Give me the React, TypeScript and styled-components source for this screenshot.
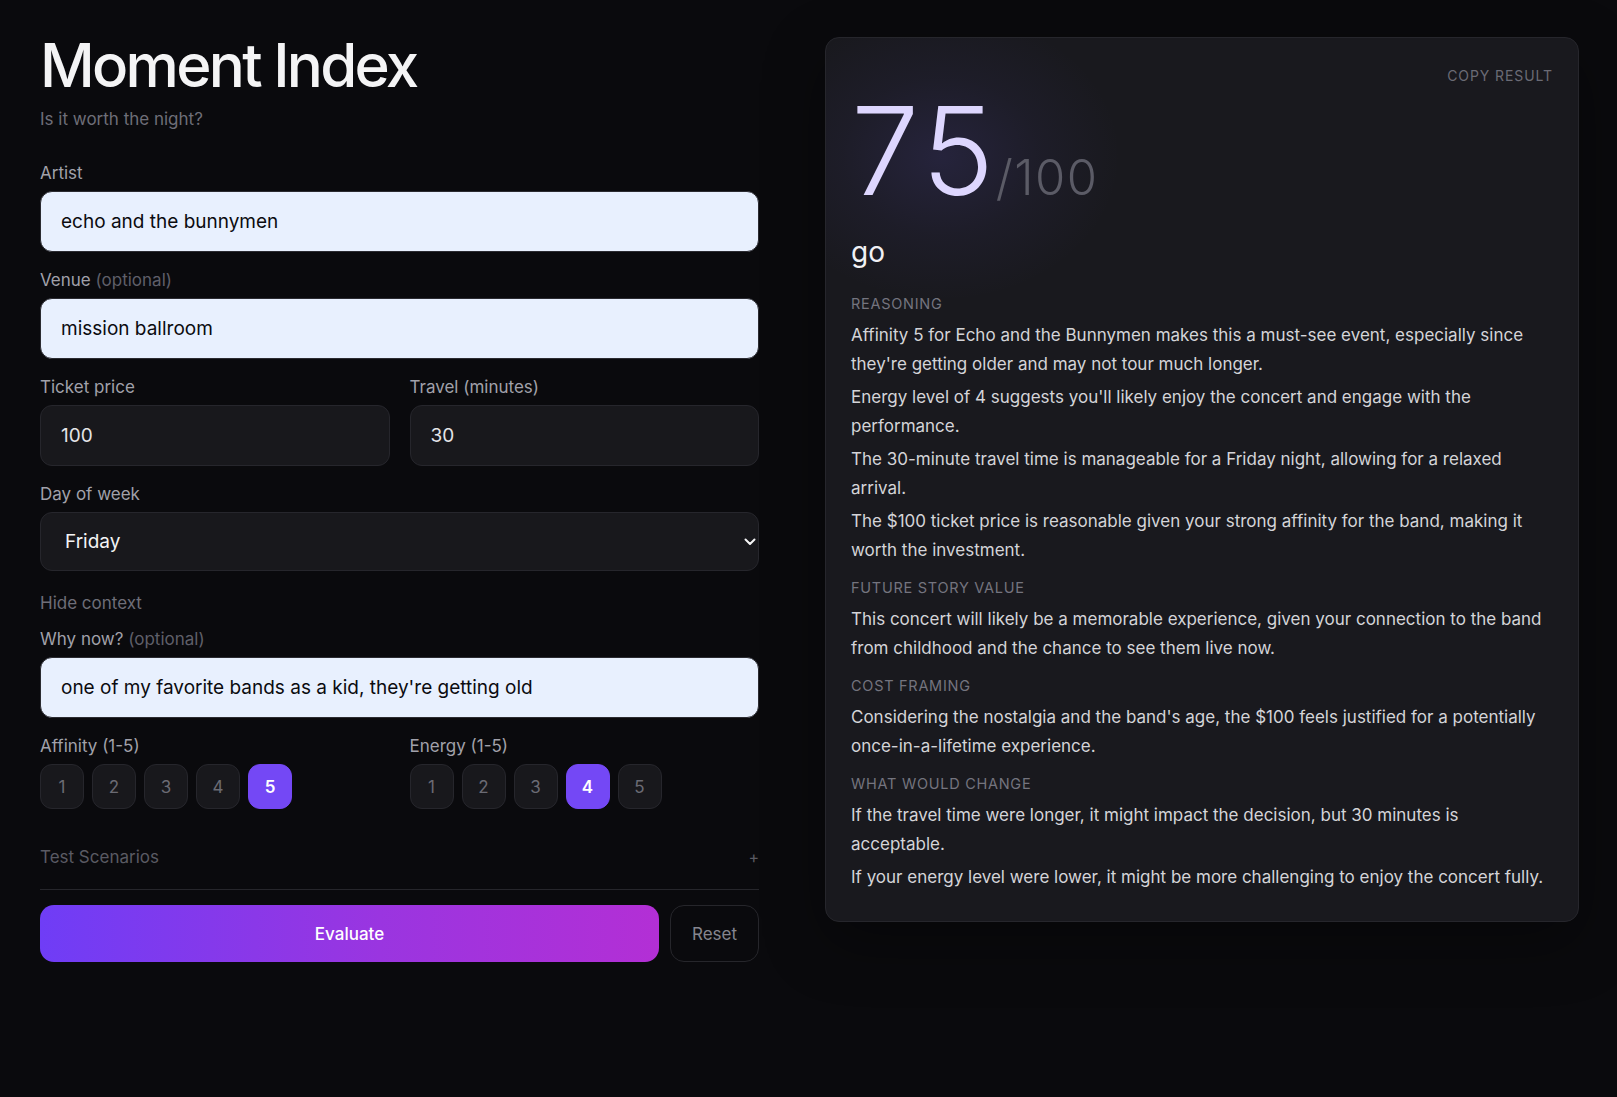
import React from "react";
import styled, { createGlobalStyle } from "styled-components";

const GlobalStyle = createGlobalStyle`
  html, body {
    margin: 0;
    padding: 0;
    background: #0a0a0d;
  }
  body {
    font-family: Inter, "Noto Sans", sans-serif;
    color: #e4e4e7;
    -webkit-font-smoothing: antialiased;
  }
  * { box-sizing: border-box; }
`;

const Page = styled.div`
  min-height: 1097px;
  padding: 36px 38px 40px 40px;
  display: grid;
  grid-template-columns: 719px 1fr;
  column-gap: 66px;
  align-items: start;
`;

const Left = styled.div`
  display: flex;
  flex-direction: column;
`;

const Title = styled.h1`
  margin: 0;
  font-size: 60px;
  line-height: 58px;
  font-weight: 500;
  letter-spacing: -0.045em;
  color: #f4f4f5;
`;

const Subtitle = styled.p`
  margin: 13px 0 0;
  font-size: 17px;
  line-height: 24px;
  color: #6e6e78;
`;

const Form = styled.div`
  margin-top: 30px;
  display: flex;
  flex-direction: column;
  gap: 16px;
`;

const Field = styled.div`
  display: flex;
  flex-direction: column;
  gap: 6px;
  min-width: 0;
`;

const Label = styled.label`
  font-size: 17px;
  line-height: 24px;
  color: #a1a1aa;
`;

const Optional = styled.span`
  color: #5f5f69;
`;

const Input = styled.input<{ $light?: boolean }>`
  height: 61px;
  width: 100%;
  border-radius: 12px;
  padding: 0 20px;
  font-family: inherit;
  font-size: 19px;
  outline: none;
  border: 1px solid ${(p) => (p.$light ? "#2b2b31" : "#26262c")};
  background: ${(p) => (p.$light ? "#e8f0fe" : "#18181c")};
  color: ${(p) => (p.$light ? "#0b0b0f" : "#e4e4e7")};
`;

const Row = styled.div`
  display: grid;
  grid-template-columns: 1fr 1fr;
  gap: 20px;
`;

const SelectWrap = styled.div`
  position: relative;
  display: flex;
`;

const Select = styled.select`
  appearance: none;
  height: 59px;
  width: 100%;
  border-radius: 12px;
  border: 1px solid #26262c;
  background: #18181c;
  color: #f4f4f5;
  font-family: inherit;
  font-size: 19px;
  padding: 0 24px;
  outline: none;
`;

const Chevron = styled.svg`
  position: absolute;
  right: 3px;
  top: 50%;
  transform: translateY(-50%);
  pointer-events: none;
`;

const ContextGroup = styled.div`
  display: flex;
  flex-direction: column;
  gap: 12px;
`;

const LinkButton = styled.button`
  align-self: flex-start;
  background: none;
  border: none;
  padding: 4px 0 0;
  font-family: inherit;
  font-size: 17px;
  line-height: 24px;
  color: #6e6e78;
  cursor: pointer;
`;

const Scales = styled.div`
  display: grid;
  grid-template-columns: 1fr 1fr;
  gap: 20px;
`;

const Pills = styled.div`
  display: flex;
  gap: 8px;
`;

const Pill = styled.button<{ $active?: boolean }>`
  width: 44px;
  height: 45px;
  border-radius: 12px;
  font-family: inherit;
  font-size: 17px;
  cursor: pointer;
  border: 1px solid ${(p) => (p.$active ? "#7448f5" : "#26262c")};
  background: ${(p) => (p.$active ? "#7448f5" : "#18181c")};
  color: ${(p) => (p.$active ? "#ffffff" : "#6b6b74")};
  font-weight: ${(p) => (p.$active ? 600 : 400)};
`;

const Scenarios = styled.div`
  margin-top: 36px;
  padding-bottom: 20px;
  border-bottom: 1px solid #26262b;
  display: flex;
  justify-content: space-between;
  align-items: center;
  font-size: 17px;
  line-height: 24px;
  color: #5a5a63;
`;

const Plus = styled.span`
  font-size: 16px;
  color: #5a5a63;
`;

const Actions = styled.div`
  margin-top: 15px;
  display: flex;
  gap: 11px;
`;

const Evaluate = styled.button`
  flex: 1;
  height: 57px;
  border: none;
  border-radius: 14px;
  background: linear-gradient(90deg, #6f3df6 0%, #9a35e0 55%, #b32fd5 100%);
  color: #ffffff;
  font-family: inherit;
  font-size: 17px;
  font-weight: 500;
  cursor: pointer;
`;

const Reset = styled.button`
  width: 89px;
  height: 57px;
  border-radius: 14px;
  border: 1px solid #26262b;
  background: transparent;
  color: #85858e;
  font-family: inherit;
  font-size: 17px;
  cursor: pointer;
`;

const Panel = styled.section`
  margin-top: 1px;
  background: #19191e;
  border: 1px solid #26262c;
  border-radius: 14px;
  padding: 25px 25px 29px;
  display: flex;
  flex-direction: column;
  box-shadow: 0 20px 60px rgba(0, 0, 0, 0.35);
  overflow: hidden;
`;

const PanelHead = styled.div`
  display: flex;
  justify-content: flex-end;
`;

const CopyButton = styled.button`
  background: none;
  border: none;
  padding: 0;
  font-family: inherit;
  font-size: 14px;
  line-height: 26px;
  letter-spacing: 0.065em;
  color: #6b6b75;
  cursor: pointer;
`;

const Score = styled.div`
  position: relative;
  margin-top: 2px;
  display: flex;
  align-items: baseline;
  align-self: flex-start;
  &::before {
    content: "";
    position: absolute;
    left: -90px;
    top: -80px;
    width: 360px;
    height: 290px;
    background: radial-gradient(
      closest-side,
      rgba(110, 95, 230, 0.15),
      rgba(110, 95, 230, 0.05) 55%,
      rgba(110, 95, 230, 0) 100%
    );
    pointer-events: none;
  }
`;

const ScoreValue = styled.span`
  position: relative;
  font-size: 122px;
  line-height: 120px;
  font-weight: 300;
  letter-spacing: 0.03em;
  color: #ddd6fe;
`;

const ScoreMax = styled.span`
  position: relative;
  font-size: 49px;
  font-weight: 300;
  letter-spacing: 0.03em;
  color: #5b5b66;
  margin-left: -2px;
`;

const Verdict = styled.div`
  margin-top: 23px;
  font-size: 28px;
  line-height: 36px;
  color: #f4f4f5;
`;

const Sections = styled.div`
  margin-top: 24px;
  display: flex;
  flex-direction: column;
  gap: 13px;
`;

const Section = styled.div`
  display: flex;
  flex-direction: column;
`;

const SectionTitle = styled.h3`
  margin: 0 0 7px;
  font-size: 14.5px;
  line-height: 20px;
  font-weight: 400;
  letter-spacing: 0.05em;
  text-transform: uppercase;
  color: #74747e;
`;

const Paras = styled.div`
  display: flex;
  flex-direction: column;
  gap: 4px;
`;

const Para = styled.p`
  margin: 0;
  font-size: 17px;
  line-height: 29px;
  color: #d4d4d8;
`;

const sections: { title: string; items: string[] }[] = [
  {
    title: "Reasoning",
    items: [
      "Affinity 5 for Echo and the Bunnymen makes this a must-see event, especially since they're getting older and may not tour much longer.",
      "Energy level of 4 suggests you'll likely enjoy the concert and engage with the performance.",
      "The 30-minute travel time is manageable for a Friday night, allowing for a relaxed arrival.",
      "The $100 ticket price is reasonable given your strong affinity for the band, making it worth the investment.",
    ],
  },
  {
    title: "Future story value",
    items: [
      "This concert will likely be a memorable experience, given your connection to the band from childhood and the chance to see them live now.",
    ],
  },
  {
    title: "Cost framing",
    items: [
      "Considering the nostalgia and the band's age, the $100 feels justified for a potentially once-in-a-lifetime experience.",
    ],
  },
  {
    title: "What would change",
    items: [
      "If the travel time were longer, it might impact the decision, but 30 minutes is acceptable.",
      "If your energy level were lower, it might be more challenging to enjoy the concert fully.",
    ],
  },
];

function Scale({ label, value }: { label: string; value: number }) {
  return (
    <Field>
      <Label>{label}</Label>
      <Pills>
        {[1, 2, 3, 4, 5].map((n) => (
          <Pill key={n} $active={n === value}>
            {n}
          </Pill>
        ))}
      </Pills>
    </Field>
  );
}

export default function App() {
  return (
    <>
      <GlobalStyle />
      <Page>
        <Left>
          <Title>Moment Index</Title>
          <Subtitle>Is it worth the night?</Subtitle>
          <Form>
            <Field>
              <Label>Artist</Label>
              <Input $light defaultValue="echo and the bunnymen" />
            </Field>
            <Field>
              <Label>
                Venue <Optional>(optional)</Optional>
              </Label>
              <Input $light defaultValue="mission ballroom" />
            </Field>
            <Row>
              <Field>
                <Label>Ticket price</Label>
                <Input defaultValue="100" />
              </Field>
              <Field>
                <Label>Travel (minutes)</Label>
                <Input defaultValue="30" />
              </Field>
            </Row>
            <Field>
              <Label>Day of week</Label>
              <SelectWrap>
                <Select defaultValue="Friday">
                  <option>Monday</option>
                  <option>Tuesday</option>
                  <option>Wednesday</option>
                  <option>Thursday</option>
                  <option>Friday</option>
                  <option>Saturday</option>
                  <option>Sunday</option>
                </Select>
                <Chevron width="12" height="8" viewBox="0 0 12 8">
                  <path d="M1.5 1.5 L6 6 L10.5 1.5" fill="none" stroke="#f4f4f5" strokeWidth="2" strokeLinecap="round" strokeLinejoin="round" />
                </Chevron>
              </SelectWrap>
            </Field>
            <ContextGroup>
              <LinkButton>Hide context</LinkButton>
              <Field>
                <Label>
                  Why now? <Optional>(optional)</Optional>
                </Label>
                <Input $light defaultValue="one of my favorite bands as a kid, they're getting old" />
              </Field>
            </ContextGroup>
            <Scales>
              <Scale label="Affinity (1-5)" value={5} />
              <Scale label="Energy (1-5)" value={4} />
            </Scales>
          </Form>
          <Scenarios>
            <span>Test Scenarios</span>
            <Plus>+</Plus>
          </Scenarios>
          <Actions>
            <Evaluate>Evaluate</Evaluate>
            <Reset>Reset</Reset>
          </Actions>
        </Left>
        <Panel>
          <PanelHead>
            <CopyButton>COPY RESULT</CopyButton>
          </PanelHead>
          <Score>
            <ScoreValue>75</ScoreValue>
            <ScoreMax>/100</ScoreMax>
          </Score>
          <Verdict>go</Verdict>
          <Sections>
            {sections.map((s) => (
              <Section key={s.title}>
                <SectionTitle>{s.title}</SectionTitle>
                <Paras>
                  {s.items.map((t, i) => (
                    <Para key={i}>{t}</Para>
                  ))}
                </Paras>
              </Section>
            ))}
          </Sections>
        </Panel>
      </Page>
    </>
  );
}
